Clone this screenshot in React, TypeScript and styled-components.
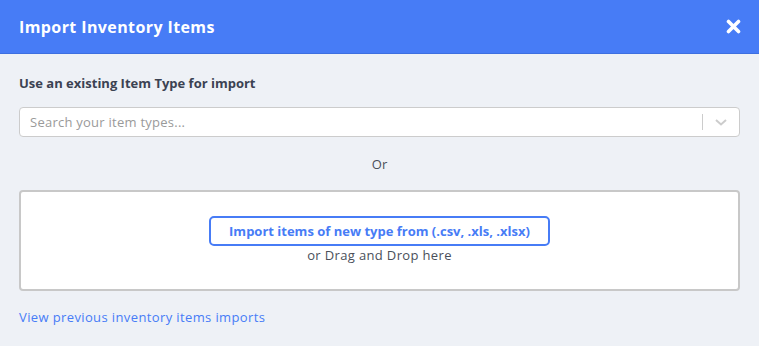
import React from "react";
import styled, { createGlobalStyle } from "styled-components";

const Global = createGlobalStyle`
  html, body { margin: 0; padding: 0; background: #eef1f6; }
  body { font-family: "Open Sans", "Noto Sans", sans-serif; }
  * { box-sizing: border-box; }
`;

const Modal = styled.div`
  width: 759px;
  height: 346px;
  background: #eef1f6;
  display: flex;
  flex-direction: column;
`;

const Header = styled.div`
  height: 54px;
  background: #477cf6;
  border-bottom: 1px solid #3d6fe0;
  display: flex;
  align-items: center;
  justify-content: space-between;
  padding: 0 18px 0 19px;
`;

const Title = styled.h1`
  margin: 0;
  font-size: 16px;
  font-weight: 700;
  color: #ffffff;
  letter-spacing: 0.4px;
`;

const CloseButton = styled.button`
  border: none;
  background: none;
  padding: 0;
  width: 16px;
  height: 16px;
  display: flex;
  align-items: center;
  justify-content: center;
  cursor: pointer;
`;

const Body = styled.div`
  padding: 20px 19px 0 19px;
  display: flex;
  flex-direction: column;
`;

const Label = styled.div`
  font-size: 13px;
  font-weight: 700;
  color: #3b4252;
  height: 18px;
  line-height: 18px;
  margin-bottom: 15px;
`;

const Select = styled.div`
  height: 30px;
  background: #fff;
  border: 1px solid #cccccc;
  border-radius: 4px;
  display: flex;
  align-items: center;
  padding-left: 10px;
`;

const Placeholder = styled.span`
  flex: 1;
  font-size: 13px;
  color: #9a9a9a;
  letter-spacing: 0.25px;
`;

const Separator = styled.span`
  width: 1px;
  height: 16px;
  background: #cccccc;
`;

const Chevron = styled.span`
  width: 36px;
  display: flex;
  align-items: center;
  justify-content: center;
`;

const OrText = styled.div`
  text-align: center;
  font-size: 13px;
  color: #4a4f5a;
  height: 20px;
  line-height: 20px;
  margin: 17px 0 16px;
`;

const DropZone = styled.div`
  height: 101px;
  background: #fff;
  border: 2px solid #c8c8c8;
  border-radius: 4px;
  display: flex;
  flex-direction: column;
  align-items: center;
  padding-top: 24px;
`;

const ImportButton = styled.button`
  height: 30px;
  padding: 0 18px;
  border: 2px solid #477cf6;
  border-radius: 5px;
  background: #fff;
  color: #477cf6;
  font-family: inherit;
  font-size: 13px;
  font-weight: 700;
  cursor: pointer;
`;

const DropHint = styled.div`
  font-size: 13px;
  color: #4a4f5a;
  line-height: 18px;
  letter-spacing: 0.35px;
`;

const Link = styled.a`
  margin-top: 17px;
  font-size: 13px;
  color: #477cf6;
  text-decoration: none;
  line-height: 18px;
  letter-spacing: 0.38px;
  align-self: flex-start;
`;

export default function App() {
  return (
    <>
      <Global />
      <Modal>
        <Header>
          <Title>Import Inventory Items</Title>
          <CloseButton aria-label="Close">
            <svg width="15" height="15" viewBox="0 0 15 15">
              <path d="M2.5 2.5 L12.5 12.5 M12.5 2.5 L2.5 12.5" stroke="#fff" strokeWidth="3.6" strokeLinecap="round" />
            </svg>
          </CloseButton>
        </Header>
        <Body>
          <Label>Use an existing Item Type for import</Label>
          <Select>
            <Placeholder>Search your item types...</Placeholder>
            <Separator />
            <Chevron>
              <svg width="14" height="10" viewBox="0 0 14 10">
                <path d="M2 3 L7 7.5 L12 3" stroke="#cccccc" strokeWidth="2" fill="none" />
              </svg>
            </Chevron>
          </Select>
          <OrText>Or</OrText>
          <DropZone>
            <ImportButton>Import items of new type from (.csv, .xls, .xlsx)</ImportButton>
            <DropHint>or Drag and Drop here</DropHint>
          </DropZone>
          <Link href="#">View previous inventory items imports</Link>
        </Body>
      </Modal>
    </>
  );
}
